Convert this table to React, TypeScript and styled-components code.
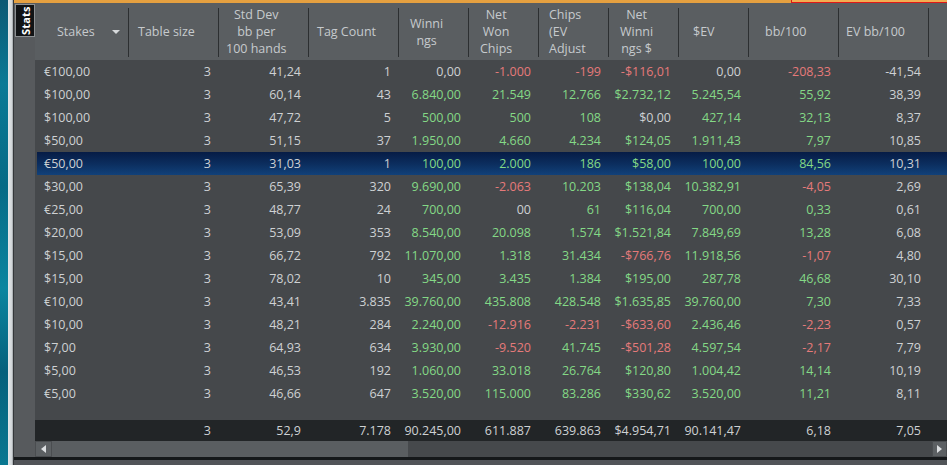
import styled, { createGlobalStyle } from 'styled-components'

const GlobalStyle = createGlobalStyle`
  html, body {
    margin: 0;
    padding: 0;
    background: #45484b;
  }
  body {
    font-family: "Open Sans", "Noto Sans", sans-serif;
    font-size: 12.5px;
    color: #ced1d3;
  }
`

type Tone = 'plain' | 'up' | 'down'

type Column = {
    title: string[]
    width: number
    pad: number
    center?: boolean
    arrow?: boolean
}

const columns: Column[] = [
    { title: ['Stakes'], width: 94, pad: 22, arrow: true },
    { title: ['Table size'], width: 90, pad: 9 },
    { title: ['Std Dev', 'bb per', '100 hands'], width: 90, pad: 7, center: true },
    { title: ['Tag Count'], width: 90, pad: 8 },
    { title: ['Winni', 'ngs'], width: 70, pad: 11, center: true },
    { title: ['Net', 'Won', 'Chips'], width: 70, pad: 11, center: true },
    { title: ['Chips', '(EV', 'Adjust'], width: 70, pad: 10 },
    { title: ['Net', 'Winni', 'ngs $'], width: 70, pad: 11, center: true },
    { title: ['$EV'], width: 70, pad: 14 },
    { title: ['bb/100'], width: 90, pad: 16 },
    { title: ['EV bb/100'], width: 90, pad: 7 },
]

const template = columns.map((c) => `${c.width}px`).join(' ') + ' 1fr'

// columns 4..9 are coloured by sign
const colouredFrom = 4
const colouredTo = 9

const rows: string[][] = [
    ['€100,00', '3', '41,24', '1', '0,00', '-1.000', '-199', '-$116,01', '0,00', '-208,33', '-41,54'],
    ['$100,00', '3', '60,14', '43', '6.840,00', '21.549', '12.766', '$2.732,12', '5.245,54', '55,92', '38,39'],
    ['$100,00', '3', '47,72', '5', '500,00', '500', '108', '$0,00', '427,14', '32,13', '8,37'],
    ['$50,00', '3', '51,15', '37', '1.950,00', '4.660', '4.234', '$124,05', '1.911,43', '7,97', '10,85'],
    ['€50,00', '3', '31,03', '1', '100,00', '2.000', '186', '$58,00', '100,00', '84,56', '10,31'],
    ['$30,00', '3', '65,39', '320', '9.690,00', '-2.063', '10.203', '$138,04', '10.382,91', '-4,05', '2,69'],
    ['€25,00', '3', '48,77', '24', '700,00', '00', '61', '$116,04', '700,00', '0,33', '0,61'],
    ['$20,00', '3', '53,09', '353', '8.540,00', '20.098', '1.574', '$1.521,84', '7.849,69', '13,28', '6,08'],
    ['$15,00', '3', '66,72', '792', '11.070,00', '1.318', '31.434', '-$766,76', '11.918,56', '-1,07', '4,80'],
    ['$15,00', '3', '78,02', '10', '345,00', '3.435', '1.384', '$195,00', '287,78', '46,68', '30,10'],
    ['€10,00', '3', '43,41', '3.835', '39.760,00', '435.808', '428.548', '$1.635,85', '39.760,00', '7,30', '7,33'],
    ['$10,00', '3', '48,21', '284', '2.240,00', '-12.916', '-2.231', '-$633,60', '2.436,46', '-2,23', '0,57'],
    ['$7,00', '3', '64,93', '634', '3.930,00', '-9.520', '41.745', '-$501,28', '4.597,54', '-2,17', '7,79'],
    ['$5,00', '3', '46,53', '192', '1.060,00', '33.018', '26.764', '$120,80', '1.004,42', '14,14', '10,19'],
    ['€5,00', '3', '46,66', '647', '3.520,00', '115.000', '83.286', '$330,62', '3.520,00', '11,21', '8,11'],
]

const totals = ['', '3', '52,9', '7.178', '90.245,00', '611.887', '639.863', '$4.954,71', '90.141,47', '6,18', '7,05']

const selectedRow = 4

const toneOf = (value: string, index: number): Tone => {
    if (index < colouredFrom || index > colouredTo) return 'plain'
    if (value.startsWith('-')) return 'down'
    if (/^\$?0*(,0+)?$/.test(value)) return 'plain'
    return 'up'
}

const toneColour: Record<Tone, string> = {
    plain: '#ced1d3',
    up: '#84d986',
    down: '#e57a7a',
}

const Page = styled.div`
    display: flex;
    height: 465px;
    width: 947px;
    overflow: hidden;
`

const DesktopEdge = styled.div`
    width: 8px;
    background: linear-gradient(180deg, #0d5873 0%, #0a7a96 18%, #066a86 40%, #0b86a0 62%, #05607c 80%, #0a7891 100%);
`

const WindowFrame = styled.div`
    width: 5px;
    background: linear-gradient(90deg, #e6e9eb 0%, #d2d7da 70%, #9da2a5 100%);
    border-right: 1px solid #34373a;
`

const Main = styled.div`
    flex: 1;
    display: flex;
    flex-direction: column;
    min-width: 0;
`

const TopStrip = styled.div`
    display: flex;
    height: 3px;
`

const Accent = styled.div`
    flex: 1;
    background: #e5a040;
`

const Warning = styled.div`
    width: 156px;
    background: #f2ae52;
    border-left: 1px solid #e01818;
    border-bottom: 1px solid #e01818;
    box-sizing: border-box;
`

const Body = styled.div`
    flex: 1;
    display: flex;
    min-height: 0;
`

const Gutter = styled.div`
    width: 21px;
    background: #575a5d;
    padding: 1px 0 0 1px;
    box-sizing: border-box;
`

const SideTab = styled.div`
    width: 20px;
    height: 33px;
    box-sizing: border-box;
    background: #111315;
    border: 1px solid #8c9093;
    color: #ffffff;
    font-size: 11px;
    font-weight: 700;
    writing-mode: vertical-rl;
    transform: rotate(180deg);
    display: flex;
    align-items: center;
    justify-content: center;
    letter-spacing: 0.2px;
`

const Table = styled.div`
    flex: 1;
    display: flex;
    flex-direction: column;
    min-width: 0;
    background: #45484b;
`

const HeaderRow = styled.div`
    display: grid;
    grid-template-columns: ${template};
    height: 57px;
    background: #5a5e61;
`

const HeaderCell = styled.div<{ $pad: number; $last?: boolean }>`
    position: relative;
    display: flex;
    align-items: center;
    justify-content: space-between;
    padding-left: ${(p) => p.$pad}px;
    padding-right: 9px;
    color: #c6cacd;
    line-height: 17px;
    white-space: nowrap;

    &::after {
        content: '';
        display: ${(p) => (p.$last ? 'none' : 'block')};
        position: absolute;
        right: 0;
        top: 5px;
        bottom: 3px;
        width: 1px;
        background: #2c2f31;
    }
`

const HeaderLabel = styled.span<{ $center?: boolean }>`
    display: inline-block;
    text-align: ${(p) => (p.$center ? 'center' : 'left')};
`

const SortArrow = styled.span`
    width: 0;
    height: 0;
    border-left: 4px solid transparent;
    border-right: 4px solid transparent;
    border-top: 4px solid #d6d9db;
    margin-top: 1px;
`

const Rows = styled.div`
    flex: 1;
`

const DataRow = styled.div<{ $selected?: boolean }>`
    display: grid;
    grid-template-columns: ${template};
    height: 23px;
    align-items: center;
    background: ${(p) => (p.$selected ? 'linear-gradient(180deg, #061c45 0%, #0c2f60 55%, #11417a 100%)' : 'transparent')};
    box-shadow: ${(p) => (p.$selected ? 'inset 2px 0 0 #45484b' : 'none')};
`

const TotalRow = styled(DataRow)`
    height: 21px;
    background: #222527;
`

const Cell = styled.div<{ $tone: Tone; $first?: boolean }>`
    color: ${(p) => toneColour[p.$tone]};
    text-align: ${(p) => (p.$first ? 'left' : 'right')};
    padding: ${(p) => (p.$first ? '0 0 0 9px' : '0 8px 0 0')};
    white-space: nowrap;
    overflow: hidden;
`

const ScrollBar = styled.div`
    display: flex;
    height: 16px;
    background: #46494c;
`

const ScrollButton = styled.div<{ $width: number }>`
    width: ${(p) => p.$width}px;
    box-sizing: border-box;
    background: #5c6063;
    border: 1px solid #4a4d50;
    display: flex;
    align-items: center;
    justify-content: center;
`

const ArrowLeft = styled.span`
    width: 0;
    height: 0;
    border-top: 4px solid transparent;
    border-bottom: 4px solid transparent;
    border-right: 5px solid #dcdfe1;
`

const ArrowRight = styled.span`
    width: 0;
    height: 0;
    border-top: 4px solid transparent;
    border-bottom: 4px solid transparent;
    border-left: 5px solid #dcdfe1;
`

const Thumb = styled.div<{ $width: number }>`
    width: ${(p) => p.$width}px;
    background: #5a5e61;
`

const Track = styled.div`
    flex: 1;
`

const BottomStrip = styled.div`
    height: 5px;
    border-top: 3px solid #15181a;
    background: #515458;
`

export default function App() {
    return (
        <>
            <GlobalStyle />
            <Page>
                <DesktopEdge />
                <WindowFrame />
                <Main>
                    <TopStrip>
                        <Accent />
                        <Warning />
                    </TopStrip>
                    <Body>
                        <Gutter>
                            <SideTab>Stats</SideTab>
                        </Gutter>
                        <Table>
                            <HeaderRow>
                                {columns.map((c, i) => (
                                    <HeaderCell key={i} $pad={c.pad}>
                                        <HeaderLabel $center={c.center}>
                                            {c.title.map((line, j) => (
                                                <div key={j}>{line}</div>
                                            ))}
                                        </HeaderLabel>
                                        {c.arrow && <SortArrow />}
                                    </HeaderCell>
                                ))}
                                <HeaderCell $pad={0} $last />
                            </HeaderRow>
                            <Rows>
                                {rows.map((r, i) => (
                                    <DataRow key={i} $selected={i === selectedRow}>
                                        {r.map((v, j) => (
                                            <Cell key={j} $first={j === 0} $tone={toneOf(v, j)}>
                                                {v}
                                            </Cell>
                                        ))}
                                        <Cell $tone="plain" />
                                    </DataRow>
                                ))}
                            </Rows>
                            <TotalRow>
                                {totals.map((v, j) => (
                                    <Cell key={j} $first={j === 0} $tone="plain">
                                        {v}
                                    </Cell>
                                ))}
                                <Cell $tone="plain" />
                            </TotalRow>
                            <ScrollBar>
                                <ScrollButton $width={17}>
                                    <ArrowLeft />
                                </ScrollButton>
                                <Thumb $width={356} />
                                <Track />
                                <ScrollButton $width={15}>
                                    <ArrowRight />
                                </ScrollButton>
                            </ScrollBar>
                        </Table>
                    </Body>
                    <BottomStrip />
                </Main>
            </Page>
        </>
    )
}
